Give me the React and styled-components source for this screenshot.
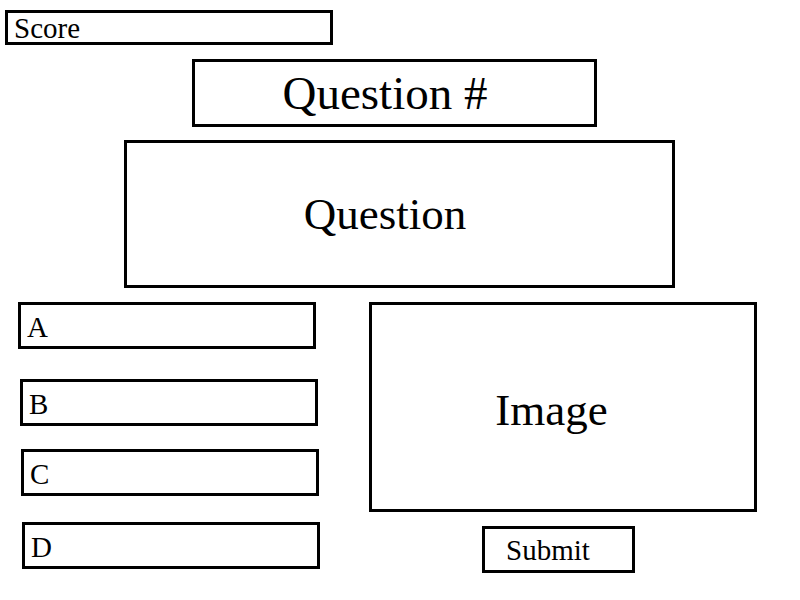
import React from "react";
import styled, { createGlobalStyle } from "styled-components";

const serifStack = `"Times New Roman", "Liberation Serif", Tinos, "DejaVu Serif", serif`;

const GlobalStyle = createGlobalStyle`
  html, body {
    margin: 0;
    padding: 0;
    background: #fff;
  }
  body {
    font-family: ${serifStack};
    color: #000;
  }
`;

const Page = styled.div`
  width: 800px;
  height: 600px;
  padding-top: 10px;
  box-sizing: border-box;
  overflow: hidden;
`;

const Frame = styled.div`
  box-sizing: border-box;
  border: 3px solid #000;
  background: #fff;
`;

const ScoreBar = styled(Frame)`
  margin-left: 5px;
  width: 328px;
  height: 35px;
  padding: 1px 6px 0;
  font-size: 29px;
  line-height: 28px;
`;

// big centered labels (question number, question, image)
const BigBox = styled(Frame)`
  display: flex;
  align-items: center;
  justify-content: center;
  font-size: ${(p) => p.size || 45}px;
  line-height: 45px;
  margin-left: ${(p) => p.left}px;
  margin-top: ${(p) => p.top}px;
  width: ${(p) => p.w}px;
  height: ${(p) => p.h}px;
  padding-right: ${(p) => p.shift}px;
  padding-top: ${(p) => p.drop || 0}px;
`;

const Body = styled.div`
  display: flex;
  align-items: flex-start;
  margin-top: 14px;
`;

const Answers = styled.div`
  display: flex;
  flex-direction: column;
  width: 369px;
`;

const Answer = styled(Frame)`
  margin-left: ${(p) => p.indent}px;
  margin-top: ${(p) => p.gap}px;
  width: 298px;
  height: 47px;
  padding: 8px 6px 0;
  font-size: 29px;
  line-height: 28px;
`;

const Side = styled.div`
  display: flex;
  flex-direction: column;
  width: 388px;
`;

const ImageBox = styled(BigBox)`
  margin: 0;
`;

const SubmitButton = styled.button`
  box-sizing: border-box;
  align-self: flex-start;
  margin: 14px 0 0 113px;
  width: 153px;
  height: 47px;
  border: 3px solid #000;
  background: #fff;
  padding: 0 21px 0 0;
  font-family: ${serifStack};
  font-size: 29px;
  line-height: 28px;
  color: #000;
`;

const answers = [
  { label: "A", indent: 18, gap: 0 },
  { label: "B", indent: 20, gap: 30 },
  { label: "C", indent: 21, gap: 23 },
  { label: "D", indent: 22, gap: 26 },
];

export default function App() {
  return (
    <>
      <GlobalStyle />
      <Page>
        <ScoreBar>Score</ScoreBar>
        <BigBox left={192} top={14} w={405} h={68} shift={19} size={47}>
          Question #
        </BigBox>
        <BigBox left={124} top={13} w={551} h={148} shift={29}>
          Question
        </BigBox>
        <Body>
          <Answers>
            {answers.map((a) => (
              <Answer key={a.label} indent={a.indent} gap={a.gap}>
                {a.label}
              </Answer>
            ))}
          </Answers>
          <Side>
            <ImageBox w={388} h={210} shift={23} drop={6}>
              Image
            </ImageBox>
            <SubmitButton>Submit</SubmitButton>
          </Side>
        </Body>
      </Page>
    </>
  );
}
